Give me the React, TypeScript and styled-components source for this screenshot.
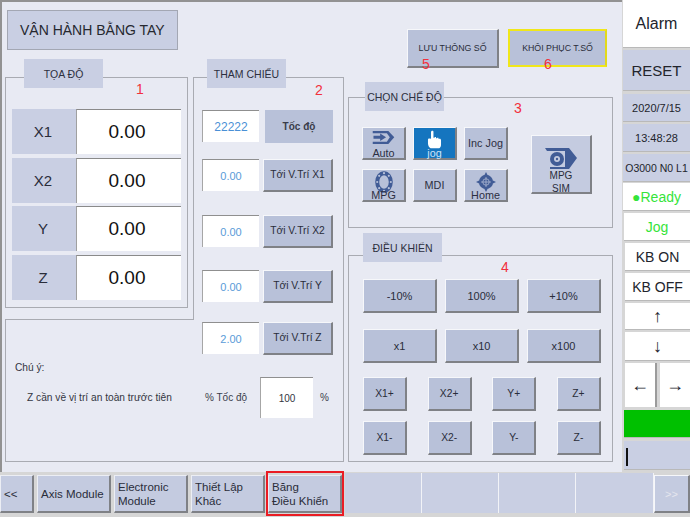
import React from 'react'
import styled, { createGlobalStyle } from 'styled-components'

const GlobalStyle = createGlobalStyle`
  html, body {
    margin: 0;
    padding: 0;
    background: #d6d6d6;
  }
  * {
    box-sizing: border-box;
  }
`

const Screen = styled.div`
  position: relative;
  width: 690px;
  height: 517px;
  overflow: hidden;
  font-family: 'Liberation Sans', Arial, sans-serif;
  color: #2a2d3a;
  background: #d6d6d6;
`

const Top = styled.div`
  display: flex;
  height: 472px;
`

const Main = styled.div`
  display: flex;
  width: 622px;
  height: 472px;
  background: #e8eaf3;
  border-top: 2px solid #929292;
  border-left: 2px solid #929292;
`

const LeftSide = styled.div`
  width: 343px;
`

const RightSide = styled.div`
  width: 277px;
`

const TitleBox = styled.div`
  display: flex;
  align-items: center;
  width: 171px;
  height: 40px;
  margin: 8px 0 0 5px;
  padding-left: 12px;
  font-size: 14px;
  color: #26282f;
  background: #c9cfe3;
  border: 1px solid #a3a7b3;
`

const Columns = styled.div`
  display: flex;
  margin: 27px 0 0 3px;
`

const LeftStack = styled.div`
  width: 188px;
`

const Group = styled.div`
  position: relative;
  border: 1px solid #a9abb2;
`

const Legend = styled.div<{ $left: number; $top?: number }>`
  position: absolute;
  top: ${(p) => p.$top ?? -19}px;
  left: ${(p) => p.$left}px;
  display: flex;
  align-items: center;
  justify-content: center;
  width: 79px;
  height: 29px;
  font-size: 10.5px;
  color: #2d3040;
  background: #c9cfe3;
`

const Mark = styled.span<{ $x: number; $y: number }>`
  position: absolute;
  left: ${(p) => p.$x}px;
  top: ${(p) => p.$y}px;
  font-size: 14px;
  line-height: 16px;
  color: #f2303c;
  pointer-events: none;
`

const CoordGroup = styled(Group)`
  width: 183px;
  height: 231px;
  padding: 31px 0 0 6px;
`

const CoordRows = styled.div`
  display: grid;
  grid-auto-rows: 45px;
  row-gap: 3.7px;
`

const CoordRow = styled.div`
  display: flex;
`

const CoordLabel = styled.div`
  display: flex;
  align-items: center;
  justify-content: center;
  width: 64px;
  padding-right: 2px;
  font-size: 15px;
  background: #c9cfe3;
`

const CoordValue = styled.div`
  display: flex;
  align-items: center;
  justify-content: center;
  width: 105px;
  padding-right: 4px;
  font-size: 19px;
  color: #111;
  background: #fff;
  border-top: 1px solid #8a8a8a;
  border-left: 1px solid #a0a0a0;
`

const NoteBox = styled.div`
  width: 188px;
  height: 143px;
  margin-top: 11px;
  padding: 41px 0 0 9px;
  font-size: 10.2px;
  color: #33363f;
  border: 1px solid #a9abb2;
  border-right: none;
`

const NoteTitle = styled.div`
  line-height: 14px;
`

const NoteLine = styled.div`
  margin: 16px 0 0 12px;
  line-height: 14px;
  white-space: nowrap;
`

const RefGroup = styled.div`
  position: relative;
  width: 151px;
  height: 385px;
  padding: 31px 0 0 9px;
  border: 1px solid #a9abb2;
  border-left: none;

  &::before {
    content: '';
    position: absolute;
    top: -1px;
    left: 0;
    width: 1px;
    height: 243px;
    background: #a9abb2;
  }
`

const RefRow = styled.div<{ $gap: number }>`
  display: flex;
  align-items: center;
  justify-content: space-between;
  width: 131px;
  height: 34px;
  margin-top: ${(p) => p.$gap}px;
`

const Field = styled.div<{ $w: number; $h: number; $size?: number; $color?: string }>`
  display: flex;
  align-items: center;
  justify-content: center;
  width: ${(p) => p.$w}px;
  height: ${(p) => p.$h}px;
  font-size: ${(p) => p.$size ?? 11}px;
  color: ${(p) => p.$color ?? '#5a9bd8'};
  background: #fff;
  border-top: 1px solid #8f8f8f;
  border-left: 1px solid #a6a6a6;
`

const Raised = styled.div<{ $w?: number; $h?: number; $size?: number; $bg?: string }>`
  display: flex;
  align-items: center;
  justify-content: center;
  flex: none;
  width: ${(p) => (p.$w ? `${p.$w}px` : 'auto')};
  height: ${(p) => (p.$h ? `${p.$h}px` : 'auto')};
  font-size: ${(p) => p.$size ?? 10.3}px;
  color: #2a2d3a;
  background: ${(p) => p.$bg ?? '#b8c1d9'};
  border-top: 1px solid #f6f7fa;
  border-left: 1px solid #f6f7fa;
  border-right: 2px solid #7f8186;
  border-bottom: 2px solid #7f8186;
`

const FlatButton = styled.div`
  display: flex;
  align-items: center;
  justify-content: center;
  width: 68px;
  height: 33px;
  font-size: 10px;
  font-weight: bold;
  color: #3a3d4a;
  background: #b8c1d9;
`

const SpeedRow = styled.div`
  display: flex;
  align-items: center;
  width: 140px;
  margin: 22px 0 0 3px;
  font-size: 10px;
  color: #3a3d4a;
`

const SpeedLabel = styled.span`
  width: 55px;
`

const Percent = styled.span`
  margin-left: 7px;
`

const ActionRow = styled.div`
  display: flex;
  gap: 9px;
  margin: 27px 0 0 62px;
`

const RestoreButton = styled(Raised)`
  border: 2px solid #f0e71a;
  border-right-color: #e3da1a;
`

const ModeGroup = styled(Group)`
  display: flex;
  align-items: flex-start;
  width: 265px;
  height: 131px;
  margin: 29px 0 0 3px;
  padding: 29px 0 0 13px;
`

const ModeGrid = styled.div`
  display: grid;
  grid-template-columns: repeat(3, 44px);
  grid-auto-rows: 33px;
  column-gap: 7px;
  row-gap: 9px;
`

const ModeButton = styled(Raised)<{ $active?: boolean }>`
  position: relative;
  flex-direction: column;
  font-size: 10.8px;
  color: ${(p) => (p.$active ? '#cfe4f7' : '#2c2f42')};
  background: ${(p) => (p.$active ? '#1575bf' : '#b8c1d9')};
`

const IconLabel = styled.span`
  position: absolute;
  left: 0;
  right: 0;
  bottom: -2px;
  text-align: center;
  line-height: 13px;
`

const SimButton = styled(Raised)`
  position: relative;
  flex-direction: column;
  justify-content: flex-start;
  margin: 8px 0 0 23px;
  padding-top: 12px;
  font-size: 10px;
  line-height: 13px;
  background: #c4cbe0;
`

const ControlGroup = styled(Group)`
  width: 265px;
  height: 207px;
  margin: 27px 0 0 3px;
  padding: 23px 0 0 14px;
`

const PercentGrid = styled.div`
  display: grid;
  grid-template-columns: repeat(3, 74px);
  grid-auto-rows: 34px;
  column-gap: 8px;
  row-gap: 16px;
`

const JogGrid = styled.div`
  display: grid;
  grid-template-columns: repeat(4, 44px);
  grid-auto-rows: 34px;
  justify-content: space-between;
  row-gap: 10px;
  width: 238px;
  margin-top: 14px;
`

const Sidebar = styled.div`
  display: flex;
  flex-wrap: wrap;
  align-content: flex-start;
  width: 68px;
  height: 472px;
`

const SideCell = styled.div<{
  $h: number
  $gap?: number
  $inset?: number
  $bg?: string
  $color?: string
  $size?: number
}>`
  display: flex;
  align-items: center;
  justify-content: center;
  width: calc(100% - ${(p) => p.$inset ?? 1}px);
  height: ${(p) => p.$h}px;
  margin-top: ${(p) => p.$gap ?? 2}px;
  margin-left: ${(p) => p.$inset ?? 1}px;
  font-size: ${(p) => p.$size ?? 15}px;
  white-space: nowrap;
  color: ${(p) => p.$color ?? '#22242c'};
  background: ${(p) => p.$bg ?? '#fff'};
  border-bottom: 1px solid #b9b9b9;
`

const ArrowCell = styled.div`
  display: flex;
  align-items: center;
  justify-content: center;
  width: 32px;
  height: 44px;
  font-size: 18px;
  color: #22242c;
  background: #fff;
  border-right: 2px solid #9b9b9b;
`

const ArrowRow = styled.div`
  display: flex;
  gap: 3px;
  width: 100%;
  margin: 2px 0 0 3px;
`

const CaretCell = styled(SideCell)`
  justify-content: flex-start;
  padding-left: 2px;
`

const Caret = styled.span`
  width: 1px;
  height: 18px;
  margin-top: 4px;
  border-left: 2px solid #111;
`

const Footer = styled.div`
  display: flex;
  height: 45px;
  background: #d6d6d6;
`

const TabSet = styled.div`
  display: flex;
  gap: 3px;
  width: 345px;
  padding-top: 3px;
`

const Tab = styled(Raised)<{ $selected?: boolean }>`
  position: relative;
  justify-content: flex-start;
  padding: 0 3px 0 3px;
  font-size: 11.5px;
  line-height: 14px;
  background: #c4cbe0;
  border-top-color: #eceef4;
  border-left-color: #eceef4;

  ${(p) =>
    p.$selected &&
    `
    &::after {
      content: '';
      position: absolute;
      box-sizing: border-box;
      top: -5px;
      left: -3px;
      width: 78px;
      height: 45px;
      border: 2px solid #ea1c24;
    }
  `}
`

const EmptyCell = styled.div<{ $w: number }>`
  width: ${(p) => p.$w}px;
  height: 40px;
  margin-top: 1px;
  background: #c9cfe3;
  border-right: 1px solid #f2f3f7;
`

const NextButton = styled(Raised)`
  margin-top: 3px;
  font-size: 11px;
  color: #e4e6ee;
  background: #c4cbe0;
`

const AutoIcon = () => (
  <svg width="23" height="16" viewBox="0 0 31 21" style={{ marginTop: -11 }}>
    <path d="M1 1h21l8 8.5-8 9H1v-3h19l4-6-4-5.500H1z" fill="#415c96" />
    <path d="M2 7.500h9V4.500l8 5-8 5v-3H2z" fill="#415c96" />
  </svg>
)

const HandIcon = () => (
  <svg width="15" height="20" viewBox="0 0 16 23" style={{ marginTop: -7 }}>
    <path
      d="M5 1c1-.6 1.800 0 1.800 1v7h1.400V8h1.500v1.500H11V9h1.500v1.200H14c1 0 1.500.8 1.500 2v4.800c0 2-1 3.300-2 4H3.500C2 20 .5 18 .5 15.500V11c0-1 1-1.500 2-1.200L4 10V2.200c0-.6.4-1 1-1.200z"
      fill="#fff"
    />
  </svg>
)

const RingIcon = () => (
  <svg width="18" height="22" viewBox="0 0 18 22" style={{ marginTop: -6 }}>
    <ellipse cx="9" cy="11" rx="6.800" ry="8.800" fill="none" stroke="#415c96" strokeWidth="4" />
    {[0, 45, 90, 135, 180, 225, 270, 315].map((a) => (
      <circle
        key={a}
        cx={9 + 6.8 * Math.cos((a * Math.PI) / 180)}
        cy={11 + 8.8 * Math.sin((a * Math.PI) / 180)}
        r="1.100"
        fill="#b8c1d9"
      />
    ))}
  </svg>
)

const HomeIcon = () => (
  <svg width="20" height="20" viewBox="0 0 28 28" style={{ marginTop: -7 }}>
    <path d="M14 0l2.500 5h-5zM14 28l-2.500-5h5zM0 14l5-2.500v5zM28 14l-5 2.500v-5z" fill="#415c96" />
    <circle cx="14" cy="14" r="10" fill="#415c96" />
    <circle cx="14" cy="14" r="4.500" fill="none" stroke="#b8c1d9" strokeWidth="1" />
    <path d="M14 7v14M7 14h14" stroke="#b8c1d9" strokeWidth="1" />
  </svg>
)

const SimIcon = () => (
  <svg width="32" height="21" viewBox="0 0 32 21" style={{ flex: 'none' }}>
    <path d="M0 0h24l8 10-8 11H5v-2h15V3H2z" fill="#415c96" />
    <circle cx="12" cy="11" r="7" fill="#415c96" />
    <circle cx="12" cy="11" r="3" fill="#c4cbe0" />
    <circle cx="12" cy="11" r="1.200" fill="#415c96" />
  </svg>
)

const coords = ['X1', 'X2', 'Y', 'Z']

const refs = [
  { gap: 15, value: '0.00', label: 'Tới V.Trí X1' },
  { gap: 22, value: '0.00', label: 'Tới V.Trí X2' },
  { gap: 21, value: '0.00', label: 'Tới V.Trí Y' },
  { gap: 18, value: '2.00', label: 'Tới V.Trí Z' },
]

const percents = ['-10%', '100%', '+10%', 'x1', 'x10', 'x100']
const jogs = ['X1+', 'X2+', 'Y+', 'Z+', 'X1-', 'X2-', 'Y-', 'Z-']

export default function App() {
  return (
    <Screen>
      <GlobalStyle />
      <Top>
        <Main>
          <LeftSide>
            <TitleBox>VẬN HÀNH BẰNG TAY</TitleBox>
            <Columns>
              <LeftStack>
                <CoordGroup>
                  <Legend $left={18}>TỌA ĐỘ</Legend>
                  <Mark $x={130} $y={3}>1</Mark>
                  <CoordRows>
                    {coords.map((c) => (
                      <CoordRow key={c}>
                        <CoordLabel>{c}</CoordLabel>
                        <CoordValue>0.00</CoordValue>
                      </CoordRow>
                    ))}
                  </CoordRows>
                </CoordGroup>
                <NoteBox>
                  <NoteTitle>Chú ý:</NoteTitle>
                  <NoteLine>Z cần về vị trí an toàn trước tiên</NoteLine>
                </NoteBox>
              </LeftStack>
              <RefGroup>
                <Legend $left={14}>THAM CHIẾU</Legend>
                <Mark $x={122} $y={4}>2</Mark>
                <RefRow $gap={0}>
                  <Field $w={57} $h={32} $size={12} $color="#4a90d6">22222</Field>
                  <FlatButton>Tốc độ</FlatButton>
                </RefRow>
                {refs.map((r) => (
                  <RefRow key={r.label} $gap={r.gap}>
                    <Field $w={57} $h={32}>{r.value}</Field>
                    <Raised $w={70} $h={33}>{r.label}</Raised>
                  </RefRow>
                ))}
                <SpeedRow>
                  <SpeedLabel>% Tốc độ</SpeedLabel>
                  <Field $w={53} $h={41} $size={10} $color="#33363f">100</Field>
                  <Percent>%</Percent>
                </SpeedRow>
              </RefGroup>
            </Columns>
          </LeftSide>
          <RightSide>
            <ActionRow>
              <Raised $w={92} $h={39} $size={8.8}>LƯU THÔNG SỐ</Raised>
              <RestoreButton $w={99} $h={38} $size={8.8}>KHÔI PHỤC T.SỐ</RestoreButton>
            </ActionRow>
            <ModeGroup>
              <Legend $left={16} $top={-16}>CHỌN CHẾ ĐỘ</Legend>
              <Mark $x={165} $y={2}>3</Mark>
              <ModeGrid>
                <ModeButton>
                  <AutoIcon />
                  <IconLabel>Auto</IconLabel>
                </ModeButton>
                <ModeButton $active>
                  <HandIcon />
                  <IconLabel>jog</IconLabel>
                </ModeButton>
                <ModeButton>Inc Jog</ModeButton>
                <ModeButton>
                  <RingIcon />
                  <IconLabel>MPG</IconLabel>
                </ModeButton>
                <ModeButton>MDI</ModeButton>
                <ModeButton>
                  <HomeIcon />
                  <IconLabel>Home</IconLabel>
                </ModeButton>
              </ModeGrid>
              <SimButton $w={61} $h={59}>
                <SimIcon />
                <span>MPG</span>
                <span>SIM</span>
              </SimButton>
            </ModeGroup>
            <ControlGroup>
              <Legend $left={14} $top={-23}>ĐIỀU KHIỂN</Legend>
              <Mark $x={152} $y={3}>4</Mark>
              <PercentGrid>
                {percents.map((p) => (
                  <Raised key={p} $size={11}>{p}</Raised>
                ))}
              </PercentGrid>
              <JogGrid>
                {jogs.map((j) => (
                  <Raised key={j}>{j}</Raised>
                ))}
              </JogGrid>
            </ControlGroup>
            <Mark $x={422} $y={56}>5</Mark>
            <Mark $x={544} $y={56}>6</Mark>
          </RightSide>
        </Main>
        <Sidebar>
          <SideCell $h={48} $gap={0} $size={16}>Alarm</SideCell>
          <SideCell $h={41} $bg="#c9cfe3" $size={15}>RESET</SideCell>
          <SideCell $h={28} $gap={3} $bg="#c9cfe3" $size={11}>2020/7/15</SideCell>
          <SideCell $h={28} $bg="#c9cfe3" $size={11}>13:48:28</SideCell>
          <SideCell $h={28} $bg="#c9cfe3" $size={10.5}>O3000 N0 L1</SideCell>
          <SideCell $h={28} $gap={1} $color="#35e43a" $size={14}>●Ready</SideCell>
          <SideCell $h={28} $inset={2} $color="#35e43a" $size={14}>Jog</SideCell>
          <SideCell $h={28} $inset={3} $size={14}>KB ON</SideCell>
          <SideCell $h={28} $inset={3} $size={14}>KB OFF</SideCell>
          <SideCell $h={27} $inset={3} $size={18}>↑</SideCell>
          <SideCell $h={29} $inset={3} $size={18}>↓</SideCell>
          <ArrowRow>
            <ArrowCell>←</ArrowCell>
            <ArrowCell>→</ArrowCell>
          </ArrowRow>
          <SideCell $h={28} $gap={3} $inset={2} $bg="#00c000" />
          <CaretCell $h={29} $gap={3} $inset={2} $bg="#c9cfe3">
            <Caret />
          </CaretCell>
        </Sidebar>
      </Top>
      <Footer>
        <TabSet>
          <Tab $w={34} $h={38}>&lt;&lt;</Tab>
          <Tab $w={74} $h={38}>Axis Module</Tab>
          <Tab $w={74} $h={38}>Electronic<br />Module</Tab>
          <Tab $w={74} $h={38}>Thiết Lập<br />Khác</Tab>
          <Tab $w={74} $h={38} $selected>Băng<br />Điều Khiển</Tab>
        </TabSet>
        <EmptyCell $w={77} />
        <EmptyCell $w={77} />
        <EmptyCell $w={77} />
        <EmptyCell $w={78} />
        <NextButton $w={36} $h={38}>&gt;&gt;</NextButton>
      </Footer>
    </Screen>
  )
}
